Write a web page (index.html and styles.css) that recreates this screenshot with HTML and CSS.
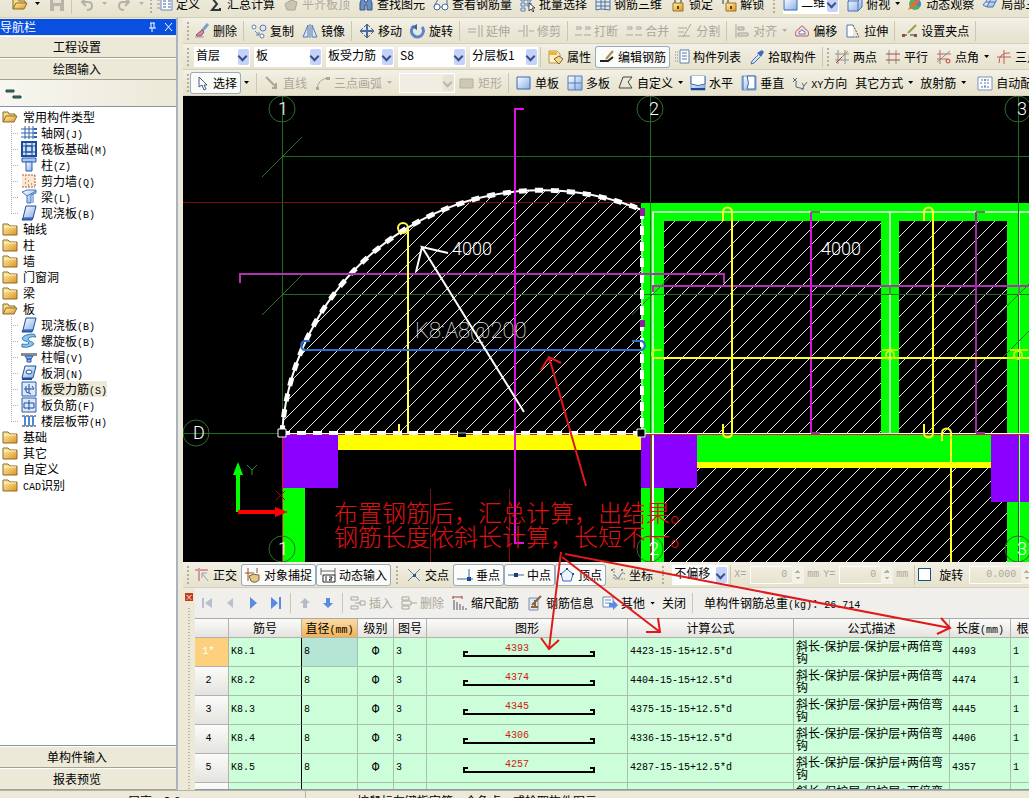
FILE: index.html
```html
<!DOCTYPE html>
<html lang="zh-CN">
<head>
    <meta charset="UTF-8">
    <meta name="viewport" content="width=device-width, initial-scale=1.0">
    <title>钢筋算量</title>
    <link rel="stylesheet" href="styles.css">
</head>
<body>

<!-- icon sprite -->
<svg class="sprite" aria-hidden="true">
    <defs>
        <linearGradient id="gold" x1="0" y1="0" x2="1" y2="1"><stop offset="0" stop-color="#fff3b0"/><stop offset="1" stop-color="#e0931c"/></linearGradient>
        <linearGradient id="sky" x1="0" y1="0" x2="1" y2="1"><stop offset="0" stop-color="#ffffff"/><stop offset="1" stop-color="#86aee8"/></linearGradient>
        <pattern id="hatch" width="16" height="16" patternUnits="userSpaceOnUse"><path d="M-1 17L17 -1M-1 1L1 -1M15 17L17 15" stroke="#e4e4e4" stroke-width="1"/></pattern>
    </defs>
    <symbol id="i-folder" viewBox="0 0 16 16"><path d="M1 3h5l2 2h7v9H1z" fill="url(#gold)" stroke="#8a6a28"/><path d="M2 6h12" stroke="#fff6c8"/></symbol>
    <symbol id="i-open" viewBox="0 0 16 16"><path d="M1 13V3h5l1 2h6v3" fill="#f7dc85" stroke="#8a6a28"/><path d="M1 13l3-6h11l-3 6z" fill="url(#gold)" stroke="#8a6a28"/></symbol>
    <symbol id="i-save" viewBox="0 0 16 16"><path d="M1 2h14v13H1z" fill="#b8b5a8"/><path d="M4 2h8v5H4zM5 10h6v5H5z" fill="#e4e1d3"/></symbol>
    <symbol id="i-undo" viewBox="0 0 16 16"><path d="M3 6h6q4 0 4 4t-5 4M7 2L3 6l4 4" fill="none" stroke="#b5b2a4" stroke-width="2"/></symbol>
    <symbol id="i-redo" viewBox="0 0 16 16"><path d="M13 6H7q-4 0-4 4t5 4M9 2l4 4-4 4" fill="none" stroke="#b5b2a4" stroke-width="2"/></symbol>
    <symbol id="i-form" viewBox="0 0 16 16"><path d="M4 1h11v13H4z" fill="#fff" stroke="#6a87b8"/><path d="M6 5h3M11 5h3M6 8h3M11 8h3M6 11h3M11 11h3" stroke="#3a62a8"/><path d="M0 4h3M0 8h3M0 12h3" stroke="#8a94a8"/></symbol>
    <symbol id="i-sum" viewBox="0 0 16 16"><path d="M12 4V2H4l5 6-5 6h8v-2" fill="none" stroke="#30363e" stroke-width="2"/></symbol>
    <symbol id="i-level" viewBox="0 0 16 16"><path d="M2 8l6-4 6 2-2 8H4z" fill="#c9c5b5" stroke="#aaa697"/><path d="M3 4l4-3 7 2" stroke="#aaa697" fill="none"/></symbol>
    <symbol id="i-find" viewBox="0 0 16 16"><path d="M2 7l2-5h2l1 4h2l1-4h2l2 5v7h-5V9H7v5H2z" fill="#6b8fc4" stroke="#345587"/></symbol>
    <symbol id="i-glasses" viewBox="0 0 16 16"><circle cx="4" cy="11" r="3" fill="#fff" stroke="#4c6a9a"/><circle cx="12" cy="11" r="3" fill="#fff" stroke="#4c6a9a"/><path d="M7 11h2M1 11l4-8M14 9V3" stroke="#4c6a9a" fill="none"/></symbol>
    <symbol id="i-batch" viewBox="0 0 16 16"><path d="M1 2h4v3H1zM7 2h4v3H7zM1 7h4v3H1zM1 12h4v3H1zM7 7h4v3H7z" fill="#dce6f5" stroke="#5d7cab"/><path d="M9 7v8l2-2 2 3 1-1-2-3h3z" fill="#fff" stroke="#444"/></symbol>
    <symbol id="i-rebar3d" viewBox="0 0 16 16"><path d="M1 2v12l5-1V3zM6 3h9v11L6 13M1 6h14M1 10h14M10 3v11" fill="none" stroke="#4a72b0"/></symbol>
    <symbol id="i-lock" viewBox="0 0 16 16"><path d="M5 8V4q0-2 3-2t3 2v4" fill="none" stroke="#8f8d85" stroke-width="2"/><path d="M3 7h10v8H3z" fill="url(#gold)" stroke="#9a7326"/><path d="M8 10v3" stroke="#604510" stroke-width="2"/></symbol>
    <symbol id="i-unlock" viewBox="0 0 16 16"><path d="M2 8V4q0-2 2-2t3 2v4" fill="none" stroke="#8f8d85" stroke-width="2"/><path d="M5 7h10v8H5z" fill="url(#gold)" stroke="#9a7326"/><path d="M10 10v3" stroke="#604510" stroke-width="2"/></symbol>
    <symbol id="i-box" viewBox="0 0 16 16"><path d="M1 5l4-4h10v10l-4 4H1z" fill="url(#sky)" stroke="#4a72b0"/><path d="M1 5h10v10M11 5l4-4" fill="none" stroke="#4a72b0"/></symbol>
    <symbol id="i-orbit" viewBox="0 0 16 16"><circle cx="8" cy="8" r="6" fill="#58b05c"/><path d="M8 2a6 6 0 0 1 5 9L8 8z" fill="#3f86d6"/><path d="M1 14q3-8 13-12-4 9-13 12z" fill="#e86a3a"/></symbol>
    <symbol id="i-part" viewBox="0 0 16 16"><path d="M1 9l5-6h9l-4 8H5z" fill="url(#sky)" stroke="#4a72b0"/><path d="M4 6h9M9 3L5 11" stroke="#4a72b0"/></symbol>
    <symbol id="i-brush" viewBox="0 0 16 16"><path d="M14 1L8 8" stroke="#7f9fc8" stroke-width="3"/><path d="M8 7l2 2-3 4H3l-1-1z" fill="#d68aa4" stroke="#8d5068"/><path d="M1 14h9" stroke="#9a9a9a"/></symbol>
    <symbol id="i-copy" viewBox="0 0 16 16"><circle cx="3" cy="4" r="2" fill="#fff" stroke="#5d7cab"/><circle cx="12" cy="5" r="3" fill="#dbe7f8" stroke="#5d7cab"/><circle cx="11" cy="13" r="2" fill="#fff" stroke="#5d7cab"/><path d="M4 8l4 4M5 12h3V9" stroke="#5d7cab" fill="none"/></symbol>
    <symbol id="i-mirror" viewBox="0 0 16 16"><path d="M6 2v12H1zM10 2v12h5z" fill="#d8e6f8" stroke="#4f79b4"/><path d="M8 1v14" stroke="#4f79b4"/></symbol>
    <symbol id="i-move" viewBox="0 0 16 16"><path d="M8 2v12M2 8h12" stroke="#4c6d9c" stroke-width="2"/><path d="M5 4l3-3 3 3M5 12l3 3 3-3M4 5L1 8l3 3M12 5l3 3-3 3" fill="none" stroke="#4c6d9c"/></symbol>
    <symbol id="i-rotate" viewBox="0 0 16 16"><path d="M4 3a6 6 0 1 0 8 1" fill="none" stroke="#5a85cc" stroke-width="3"/><path d="M7 1v6L2 4z" fill="#3a62b0"/></symbol>
    <symbol id="i-extend" viewBox="0 0 16 16"><path d="M1 6h8M1 9h8M12 2v12M15 2v12" stroke="#aaa798"/></symbol>
    <symbol id="i-trim" viewBox="0 0 16 16"><path d="M0 8h5M11 8h5M6 2v12M9 2v12" stroke="#aaa798"/></symbol>
    <symbol id="i-break" viewBox="0 0 16 16"><path d="M1 4h5v2H1M10 4h5v2h-5M0 12h7M9 12h7" stroke="#aaa798" fill="none"/></symbol>
    <symbol id="i-split" viewBox="0 0 16 16"><path d="M1 5h9M1 9h6M14 1L6 14M1 13h12" stroke="#aaa798" fill="none"/></symbol>
    <symbol id="i-align" viewBox="0 0 16 16"><path d="M2 1v14" stroke="#aaa798"/><path d="M4 4h6v3H4zM4 10h10v3H4z" fill="#d8d4c4" stroke="#aaa798"/></symbol>
    <symbol id="i-offset" viewBox="0 0 16 16"><path d="M2 13q-2-5 3-7 3-6 6 0 5 2 3 7z" fill="#f8dce0" stroke="#c25a6a"/><path d="M5 11q-1-3 2-3 1-3 2 0 3 0 2 3z" fill="#fff" stroke="#5d7cab"/></symbol>
    <symbol id="i-stretch" viewBox="0 0 16 16"><path d="M8 14H2V2h6" fill="#fff" stroke="#4f79b4"/><path d="M8 2l6 12H8" fill="none" stroke="#555" stroke-dasharray="2 1"/></symbol>
    <symbol id="i-grip" viewBox="0 0 16 16"><path d="M2 12h3M8 12h5" stroke="#333"/><path d="M14 2L6 10" stroke="#a39a48" stroke-width="2"/><path d="M0 11h3v3H0zM12 11h3v3h-3z" fill="#8a5050"/></symbol>
    <symbol id="i-prop" viewBox="0 0 16 16"><path d="M1 2h8l3 3v9H1z" fill="#fdf0c4" stroke="#b8964a"/><path d="M1 3h8v3H1z" fill="#f0b23c"/><path d="M6 10l5-3 4 3-4 5z" fill="#f6d888" stroke="#7a663a"/></symbol>
    <symbol id="i-edit" viewBox="0 0 16 16"><path d="M1 12h8l5-4" fill="none" stroke="#222" stroke-width="2"/><path d="M14 2L7 10" stroke="#b08850" stroke-width="2"/></symbol>
    <symbol id="i-list" viewBox="0 0 16 16"><path d="M6 1h9v13H6z" fill="#fff" stroke="#5d7cab"/><path d="M8 4h5M8 7h5M8 10h5" stroke="#4a72b0"/><path d="M1 3h3M1 6h3M1 9h3M1 12h3" stroke="#888" stroke-dasharray="1 1"/></symbol>
    <symbol id="i-pick" viewBox="0 0 16 16"><path d="M9 6l-6 6-1 3 3-1 6-6" fill="#cfe2fa" stroke="#4a72b0"/><path d="M8 4l4 4 3-5-2-2z" fill="#3b6cb8"/></symbol>
    <symbol id="i-2pt" viewBox="0 0 16 16"><path d="M4 1v14M11 1v14M1 5h14M1 11h14" stroke="#8c9098"/><path d="M2 14L14 2" stroke="#ad8a50"/><path d="M2 14L8 8" stroke="#b33"/></symbol>
    <symbol id="i-parallel" viewBox="0 0 16 16"><path d="M4 1v14M11 1v14" stroke="#8c9098"/><path d="M1 5h14M1 11h14" stroke="#b04848"/></symbol>
    <symbol id="i-angle" viewBox="0 0 16 16"><path d="M4 1v14M1 5h14M1 10h10" stroke="#b06a6a"/><path d="M1 13L14 2" stroke="#8c9098"/><circle cx="12" cy="12" r="2" fill="none" stroke="#c33"/></symbol>
    <symbol id="i-3pt" viewBox="0 0 16 16"><path d="M1 8h14M8 1v14" stroke="#c05a5a"/><path d="M3 14Q3 3 14 4" fill="none" stroke="#c05a5a"/></symbol>
    <symbol id="i-cursor" viewBox="0 0 16 16"><path d="M5 2v10l3-2 2 5 2-1-2-4h3z" fill="#fff" stroke="#445a80"/></symbol>
    <symbol id="i-line" viewBox="0 0 16 16"><path d="M2 2l10 10M12 8v5H8" fill="none" stroke="#aaa798" stroke-width="2"/></symbol>
    <symbol id="i-arc" viewBox="0 0 16 16"><path d="M2 14Q3 4 13 3" fill="none" stroke="#aaa798"/><path d="M1 12h3v3H1zM11 2h4v3h-4z" fill="#aaa798"/></symbol>
    <symbol id="i-rect" viewBox="0 0 16 16"><path d="M1 4h13v9H1z" fill="#cdc9b9" stroke="#b5b1a1"/></symbol>
    <symbol id="i-single" viewBox="0 0 16 16"><path d="M1 2h13v12H1z" fill="url(#sky)" stroke="#3b68b0"/></symbol>
    <symbol id="i-multi" viewBox="0 0 16 16"><path d="M1 1h14v14H1z" fill="url(#sky)" stroke="#5a7cab"/><path d="M8 1v14M1 8h14" stroke="#5a7cab"/></symbol>
    <symbol id="i-custom" viewBox="0 0 16 16"><path d="M5 2h9l-4 5 4 6H1z" fill="none" stroke="#444"/></symbol>
    <symbol id="i-horz" viewBox="0 0 16 16"><path d="M1 1h14v14H1z" fill="url(#sky)" stroke="#7a9acb"/><path d="M1 1v8q7 3 14 0V1" fill="#fff" stroke="#3b68b0"/><path d="M1 14h14" stroke="#204a90" stroke-width="2"/></symbol>
    <symbol id="i-vert" viewBox="0 0 16 16"><path d="M1 1h14v14H1z" fill="url(#sky)" stroke="#7a9acb"/><path d="M6 1q3 7 0 13h8V1z" fill="#fff" stroke="#3b68b0"/><path d="M2 1v14" stroke="#3b68b0"/></symbol>
    <symbol id="i-xy" viewBox="0 0 16 16"><path d="M1 3l4 4M5 3L1 7M4 7v5l8 2M10 8l2 3 3-4M12 11l-2 4" fill="none" stroke="#54698f"/></symbol>
    <symbol id="i-auto" viewBox="0 0 16 16"><path d="M1 2h14v13H1z" fill="#fff" stroke="#7c93b8"/><path d="M8 4v9M4 5h8M4 12h8M3 8h3M10 8h3" stroke="#4a72b0" stroke-dasharray="2 1"/></symbol>
    <!-- tree -->
    <symbol id="i-grid" viewBox="0 0 16 16"><path d="M4 1v13M8 1v13M12 1v13M0 4h14M0 8h14M0 12h14" stroke="#2f62b0"/><path d="M13 3h3v2h-3zM13 7h3v2h-3zM13 11h3v2h-3z" fill="#2f62b0"/></symbol>
    <symbol id="i-raft" viewBox="0 0 16 16"><path d="M1 1h14v14H1z" fill="#cfe0fa" stroke="#1d4c9a" stroke-width="2"/><path d="M5 5h6v6H5zM5 1v14M11 1v14M1 5h14M1 11h14" fill="none" stroke="#1d4c9a"/></symbol>
    <symbol id="i-column" viewBox="0 0 16 16"><path d="M1 1h14v4H1z" fill="#a9c7f2" stroke="#2b5aa8"/><path d="M5 5h6v9H5z" fill="url(#sky)" stroke="#2b5aa8"/></symbol>
    <symbol id="i-wall" viewBox="0 0 16 16"><path d="M1 2h13v12H1z" fill="#fbe6cf"/><path d="M1 2h13M14 2v12M1 14h13" stroke="#a55b3a" stroke-dasharray="2 1"/><path d="M4 10h1M7 8h1M10 11h1M7 12h1M4 6h1" stroke="#8a4a2a"/></symbol>
    <symbol id="i-beam" viewBox="0 0 16 16"><path d="M1 3l5-2h9v3L10 6v8H6V7z" fill="url(#sky)" stroke="#3f78c0"/><path d="M6 7l9-5M12 5v9" stroke="#3f78c0"/></symbol>
    <symbol id="i-slab" viewBox="0 0 16 16"><path d="M5 1h10l-3 12H2z" fill="url(#sky)" stroke="#1d4c9a"/><path d="M2 13l-1 2h10l1-2" fill="#3b6cb8" stroke="#1d4c9a"/></symbol>
    <symbol id="i-spiral" viewBox="0 0 16 16"><path d="M1 5q3-4 12-4l2 3q-7-1-8 2 0 2 4 3 4 2-1 4-4 2-9 1l0-3q6 1 7-1-1-2-4-2-3-1-3-3z" fill="#8cc6ee" stroke="#3178b4"/></symbol>
    <symbol id="i-cap" viewBox="0 0 16 16"><path d="M0 4h16v3H0z" fill="#888c92"/><path d="M4 7h8l-2 3H6zM6 10h4v3H6z" fill="#8eb4ec" stroke="#2b5aa8"/></symbol>
    <symbol id="i-hole" viewBox="0 0 16 16"><path d="M4 1h11l-3 12H1z" fill="url(#sky)" stroke="#1d4c9a"/><ellipse cx="8" cy="7" rx="3" ry="2" fill="#fff" stroke="#1d4c9a"/><path d="M1 14h10" stroke="#1d4c9a" stroke-width="2"/></symbol>
    <symbol id="i-force" viewBox="0 0 16 16"><path d="M1 1h14v14H1z" fill="#dbe8fb" stroke="#2b5aa8"/><path d="M8 3v8q0 2 2 2M5 5v5q0 2 3 2M3 8h10l-2-3" fill="none" stroke="#1d4c9a"/></symbol>
    <symbol id="i-neg" viewBox="0 0 16 16"><path d="M1 1h14v14H1z" fill="#dbe8fb" stroke="#2b5aa8"/><path d="M8 3v10M3 6h10v5M3 6v5M3 11h10" fill="none" stroke="#1d4c9a"/></symbol>
    <symbol id="i-band" viewBox="0 0 16 16"><path d="M1 3h14M1 13h14" stroke="#222" stroke-dasharray="3 1"/><path d="M3 3h2v10H3zM7 3h2v10H7zM11 3h2v10h-2z" fill="#4f86d8"/></symbol>
    <!-- snap bar -->
    <symbol id="i-ortho" viewBox="0 0 16 16"><path d="M1 3h13M5 1v13" stroke="#d69a9a" stroke-width="2"/><path d="M8 6l6 8M8 6v5M8 6h5" stroke="#9aa3b8" fill="none"/></symbol>
    <symbol id="i-osnap" viewBox="0 0 16 16"><path d="M3 1v13M0 6h9M12 1v5" stroke="#a04a28"/><path d="M4 9q4-3 10-1v5q-4 4-8 1z" fill="#e4c888" stroke="#7a6030"/></symbol>
    <symbol id="i-dyn" viewBox="0 0 16 16"><path d="M1 1v7M15 1v7M1 4h14" stroke="#666" fill="none"/><path d="M3 8h12v7H3z" fill="#fff" stroke="#222"/><path d="M6 9v5M9 10h3v1l-3 2h3" stroke="#222" fill="none"/></symbol>
    <symbol id="i-cross" viewBox="0 0 16 16"><path d="M2 2l12 12M14 2L2 14" stroke="#5a7ca8"/><path d="M7 7h3v3H7z" fill="#345587"/></symbol>
    <symbol id="i-perp" viewBox="0 0 16 16"><path d="M0 12h16M12 2v10" stroke="#3a68a8"/><path d="M10 10h4v4h-4z" fill="#204a90"/></symbol>
    <symbol id="i-mid" viewBox="0 0 16 16"><path d="M0 8h16" stroke="#3a68a8"/><path d="M6 6h4v4H6z" fill="#1d3c6a"/></symbol>
    <symbol id="i-vertex" viewBox="0 0 16 16"><path d="M8 2l6 5-2 7H4L2 7z" fill="#eef5fd" stroke="#3a68a8"/><path d="M7 1h2v2H7zM1 6h2v2H1zM13 6h2v2h-2z" fill="#204a90"/></symbol>
    <symbol id="i-coord" viewBox="0 0 16 16"><path d="M4 1v11h11" stroke="#888" stroke-dasharray="2 1" fill="none"/><path d="M5 8q3 6 5 1t5-2" fill="none" stroke="#5a7ca8"/><circle cx="2" cy="3" r="1" fill="#555"/><circle cx="12" cy="3" r="1" fill="#555"/></symbol>
    <!-- record bar -->
    <symbol id="i-first" viewBox="0 0 16 16"><path d="M3 3h2v10H3zM13 3v10L6 8z" fill="#b9bfcd"/></symbol>
    <symbol id="i-prev" viewBox="0 0 16 16"><path d="M11 3v10L5 8z" fill="#b9bfcd"/></symbol>
    <symbol id="i-next" viewBox="0 0 16 16"><path d="M5 2v12l7-6z" fill="#5a8ae4"/></symbol>
    <symbol id="i-last" viewBox="0 0 16 16"><path d="M3 2v12l7-6zM11 2h2v12h-2z" fill="#5a8ae4"/></symbol>
    <symbol id="i-up" viewBox="0 0 16 16"><path d="M8 3l5 5h-3v5H6V8H3z" fill="#b4bccb"/></symbol>
    <symbol id="i-down" viewBox="0 0 16 16"><path d="M8 13l5-5h-3V3H6v5H3z" fill="#5a8ae4"/></symbol>
    <symbol id="i-insert" viewBox="0 0 16 16"><path d="M1 2h7v3H1zM1 11h7v3H1zM5 8h6M10 6h5v4h-5z" fill="none" stroke="#aaa798"/></symbol>
    <symbol id="i-remove" viewBox="0 0 16 16"><path d="M1 2h7v3H1zM1 6h9v4H1zM1 11h7v3H1zM10 8h6" fill="none" stroke="#aaa798"/></symbol>
    <symbol id="i-scale" viewBox="0 0 16 16"><path d="M1 2h9M1 1v3M10 1v3" stroke="#a04030"/><path d="M2 5v10M5 7v8M8 9v6M11 11v4M14 13v2" stroke="#555"/></symbol>
    <symbol id="i-info" viewBox="0 0 16 16"><path d="M2 3h9v12H2z" fill="#dce6f5" stroke="#7f8da8"/><path d="M14 1L5 10M4 12h7M8 5v8" stroke="#8a6440" stroke-width="2"/></symbol>
    <symbol id="i-other" viewBox="0 0 16 16"><path d="M1 2h10v10H1z" fill="#fff" stroke="#6a87b8"/><path d="M3 5h6M3 8h6" stroke="#6a87b8"/><path d="M7 8h4V5l5 5-5 5v-3H7z" fill="#5a8ae4"/></symbol>
</svg>

<div class="app">
    <div class="toolbar main-bar">
        <button class="btn"><svg class="icon"><use href="#i-open"/></svg></button>
        <button class="drop" aria-label="打开"></button>
        <button class="btn" disabled><svg class="icon"><use href="#i-save"/></svg></button>
        <span class="sep"></span>
        <button class="btn" disabled><svg class="icon"><use href="#i-undo"/></svg></button>
        <button class="drop" disabled aria-label="撤销"></button>
        <button class="btn" disabled><svg class="icon"><use href="#i-redo"/></svg></button>
        <button class="drop" disabled aria-label="恢复"></button>
        <span class="grip"></span>
        <button class="btn"><svg class="icon"><use href="#i-form"/></svg>定义</button>
        <button class="btn"><svg class="icon"><use href="#i-sum"/></svg>汇总计算</button>
        <button class="btn" disabled><svg class="icon"><use href="#i-level"/></svg>平齐板顶</button>
        <button class="btn"><svg class="icon"><use href="#i-find"/></svg>查找图元</button>
        <button class="btn"><svg class="icon"><use href="#i-glasses"/></svg>查看钢筋量</button>
        <button class="btn"><svg class="icon"><use href="#i-batch"/></svg>批量选择</button>
        <button class="btn"><svg class="icon"><use href="#i-rebar3d"/></svg>钢筋三维</button>
        <button class="btn"><svg class="icon"><use href="#i-lock"/></svg>锁定</button>
        <button class="btn"><svg class="icon"><use href="#i-unlock"/></svg>解锁</button>
        <span class="grip mid"></span>
        <span class="combo with-icon"><svg class="icon"><use href="#i-single"/></svg><select aria-label="视图"><option>二维</option></select></span>
        <button class="btn after-combo"><svg class="icon"><use href="#i-box"/></svg>俯视<span class="caret"></span></button>
        <button class="btn"><svg class="icon"><use href="#i-orbit"/></svg>动态观察</button>
        <button class="btn"><svg class="icon"><use href="#i-part"/></svg>局部三维</button>
    </div>

    <div class="content">
        <nav class="sidebar">
            <div class="nav-title">
                <span>导航栏</span>
                <svg class="nav-tools" viewBox="0 0 30 14"><path d="M4 3h5M5 3v5M8 3v5M3 8h7M6 8v4M19 3l7 8M26 3l-7 8" stroke="#fff" fill="none"/></svg>
            </div>
            <button class="nav-btn">工程设置</button>
            <button class="nav-btn">绘图输入</button>
            <div class="tree-head"><svg width="40" height="20"><path d="M6 6h8v2H6zM13 12h8v2h-8z" fill="#3c6e6a" stroke="#23474a"/></svg></div>
            <ul class="tree">
                <li><svg class="icon"><use href="#i-open"/></svg><span>常用构件类型</span>
                    <ul>
                        <li><svg class="icon"><use href="#i-grid"/></svg><span>轴网<i>(J)</i></span></li>
                        <li><svg class="icon"><use href="#i-raft"/></svg><span>筏板基础<i>(M)</i></span></li>
                        <li><svg class="icon"><use href="#i-column"/></svg><span>柱<i>(Z)</i></span></li>
                        <li><svg class="icon"><use href="#i-wall"/></svg><span>剪力墙<i>(Q)</i></span></li>
                        <li><svg class="icon"><use href="#i-beam"/></svg><span>梁<i>(L)</i></span></li>
                        <li><svg class="icon"><use href="#i-slab"/></svg><span>现浇板<i>(B)</i></span></li>
                    </ul>
                </li>
                <li><svg class="icon"><use href="#i-folder"/></svg><span>轴线</span></li>
                <li><svg class="icon"><use href="#i-folder"/></svg><span>柱</span></li>
                <li><svg class="icon"><use href="#i-folder"/></svg><span>墙</span></li>
                <li><svg class="icon"><use href="#i-folder"/></svg><span>门窗洞</span></li>
                <li><svg class="icon"><use href="#i-folder"/></svg><span>梁</span></li>
                <li><svg class="icon"><use href="#i-open"/></svg><span>板</span>
                    <ul>
                        <li><svg class="icon"><use href="#i-slab"/></svg><span>现浇板<i>(B)</i></span></li>
                        <li><svg class="icon"><use href="#i-spiral"/></svg><span>螺旋板<i>(B)</i></span></li>
                        <li><svg class="icon"><use href="#i-cap"/></svg><span>柱帽<i>(V)</i></span></li>
                        <li><svg class="icon"><use href="#i-hole"/></svg><span>板洞<i>(N)</i></span></li>
                        <li><svg class="icon"><use href="#i-force"/></svg><span class="current">板受力筋<i>(S)</i></span></li>
                        <li><svg class="icon"><use href="#i-neg"/></svg><span>板负筋<i>(F)</i></span></li>
                        <li><svg class="icon"><use href="#i-band"/></svg><span>楼层板带<i>(H)</i></span></li>
                    </ul>
                </li>
                <li><svg class="icon"><use href="#i-folder"/></svg><span>基础</span></li>
                <li><svg class="icon"><use href="#i-folder"/></svg><span>其它</span></li>
                <li><svg class="icon"><use href="#i-folder"/></svg><span>自定义</span></li>
                <li><svg class="icon"><use href="#i-folder"/></svg><span><i>CAD</i>识别</span></li>
            </ul>
            <button class="nav-btn">单构件输入</button>
            <button class="nav-btn">报表预览</button>
        </nav>

        <main class="workspace">
            <div class="toolbar">
                <span class="grip"></span>
                <button class="btn"><svg class="icon"><use href="#i-brush"/></svg>删除</button>
                <span class="sep"></span>
                <button class="btn"><svg class="icon"><use href="#i-copy"/></svg>复制</button>
                <button class="btn"><svg class="icon"><use href="#i-mirror"/></svg>镜像</button>
                <span class="sep"></span>
                <button class="btn"><svg class="icon"><use href="#i-move"/></svg>移动</button>
                <button class="btn"><svg class="icon"><use href="#i-rotate"/></svg>旋转</button>
                <span class="sep"></span>
                <button class="btn" disabled><svg class="icon"><use href="#i-extend"/></svg>延伸</button>
                <button class="btn" disabled><svg class="icon"><use href="#i-trim"/></svg>修剪</button>
                <span class="sep"></span>
                <button class="btn" disabled><svg class="icon"><use href="#i-break"/></svg>打断</button>
                <button class="btn" disabled><svg class="icon"><use href="#i-break"/></svg>合并</button>
                <button class="btn" disabled><svg class="icon"><use href="#i-split"/></svg>分割</button>
                <span class="sep"></span>
                <button class="btn" disabled><svg class="icon"><use href="#i-align"/></svg>对齐<span class="caret"></span></button>
                <button class="btn"><svg class="icon"><use href="#i-offset"/></svg>偏移</button>
                <button class="btn"><svg class="icon"><use href="#i-stretch"/></svg>拉伸</button>
                <span class="sep"></span>
                <button class="btn"><svg class="icon"><use href="#i-grip"/></svg>设置夹点</button>
                <span class="sep"></span>
            </div>

            <div class="toolbar">
                <span class="grip"></span>
                <span class="combo"><select aria-label="楼层"><option>首层</option></select></span>
                <span class="combo wide"><select aria-label="构件"><option>板</option></select></span>
                <span class="combo wide"><select aria-label="构件类型"><option>板受力筋</option></select></span>
                <span class="combo wide"><select aria-label="构件名称"><option>S8</option></select></span>
                <span class="combo wide"><select aria-label="分层板"><option>分层板1</option></select></span>
                <span class="sep"></span>
                <button class="btn"><svg class="icon"><use href="#i-prop"/></svg>属性</button>
                <button class="btn pressed"><svg class="icon"><use href="#i-edit"/></svg>编辑钢筋</button>
                <button class="btn"><svg class="icon"><use href="#i-list"/></svg>构件列表</button>
                <button class="btn"><svg class="icon"><use href="#i-pick"/></svg>拾取构件</button>
                <span class="sep"></span>
                <span class="grip"></span>
                <button class="btn"><svg class="icon"><use href="#i-2pt"/></svg>两点</button>
                <button class="btn"><svg class="icon"><use href="#i-parallel"/></svg>平行</button>
                <button class="btn"><svg class="icon"><use href="#i-angle"/></svg>点角<span class="caret"></span></button>
                <button class="btn"><svg class="icon"><use href="#i-3pt"/></svg>三点辅轴</button>
            </div>

            <div class="toolbar">
                <span class="grip"></span>
                <button class="btn pressed"><svg class="icon"><use href="#i-cursor"/></svg>选择</button>
                <button class="drop" aria-label="选择方式"></button>
                <span class="sep"></span>
                <button class="btn" disabled><svg class="icon"><use href="#i-line"/></svg>直线</button>
                <button class="btn" disabled><svg class="icon"><use href="#i-arc"/></svg>三点画弧<span class="caret"></span></button>
                <span class="combo"><select disabled aria-label="弧参数"><option></option></select></span>
                <button class="btn" disabled><svg class="icon"><use href="#i-rect"/></svg>矩形</button>
                <span class="sep"></span>
                <button class="btn"><svg class="icon"><use href="#i-single"/></svg>单板</button>
                <button class="btn"><svg class="icon"><use href="#i-multi"/></svg>多板</button>
                <button class="btn"><svg class="icon"><use href="#i-custom"/></svg>自定义<span class="caret"></span></button>
                <button class="btn"><svg class="icon"><use href="#i-horz"/></svg>水平</button>
                <button class="btn"><svg class="icon"><use href="#i-vert"/></svg>垂直</button>
                <button class="btn"><svg class="icon"><use href="#i-xy"/></svg><span><i>XY</i>方向</span></button>
                <button class="btn">其它方式<span class="caret"></span></button>
                <button class="btn">放射筋<span class="caret"></span></button>
                <button class="btn after-combo"><svg class="icon"><use href="#i-auto"/></svg>自动配筋</button>
            </div>

            <div class="canvas">
                <svg class="drawing">
                    <g transform="translate(-183 -96)" fill="none">
                        <!-- hatched slabs -->
                        <path d="M282 433A261 261 0 0 1 642 210V433z" fill="url(#hatch)"/>
                        <path d="M664 221H881V433H664zM899 221H1007V433H899zM664 468H1007V562H664z" fill="url(#hatch)"/>

                        <!-- walls, beams, columns -->
                        <g shape-rendering="crispEdges">
                            <path d="M641 203H3000V221H664V562H641zM881 221h18v212h-18zM1007 221h24v341h-24zM697 433h294v29H697zM283 488h22v74h-22z" fill="#00ff00"/>
                            <path d="M338 434h303v16H338zM697 462h294v6H697z" fill="#ffff00"/>
                            <path d="M283 434h55v54h-55zM641 433h56v55h-56zM991 433h60v69h-60z" fill="#8c00ff"/>
                            <path d="M653 562V212H3000M890 212V433M1019 212V562" stroke="#b4f7b4" stroke-width="2"/>
                            <path d="M653 434V562" stroke="#fff" stroke-width="2"/>
                        </g>

                        <!-- axes -->
                        <g stroke="#1f6b1f" shape-rendering="crispEdges">
                            <path d="M282 96V562M650 96V562M1018 96V562M282 156H3000M282 294H3000M183 433H282"/>
                        </g>
                        <g stroke="#2c6e2c">
                            <circle cx="282" cy="109" r="13"/><circle cx="650" cy="109" r="13"/><circle cx="1018" cy="109" r="13"/>
                            <circle cx="282" cy="549" r="13"/><circle cx="650" cy="549" r="13"/><circle cx="1018" cy="549" r="13"/>
                            <circle cx="196" cy="433" r="13"/>
                            <path d="M262 177L302 137M262 315L302 275M632 315L670 277M998 315L1032 281M1000 360L1032 328"/>
                        </g>
                        <g shape-rendering="crispEdges">
                            <path d="M183 202H641M430 489V562M509 489V562" stroke="#7a1010"/>
                            <path d="M282 433H3000" stroke="#fff"/>
                            <path d="M282 434H3000M282 434V562M651 434V562" stroke="#d02020"/>
                        </g>

                        <!-- selected slab outline -->
                        <path d="M282 433A261 261 0 0 1 642 210" stroke="#fff" stroke-width="2"/>
                        <path d="M282 433A261 261 0 0 1 642 210" stroke="#fff" stroke-width="5" stroke-dasharray="8 8"/>
                        <path d="M642 210V433M642 433H282" stroke="#fff" stroke-width="4" stroke-dasharray="9 7"/>
                        <path d="M642 210V433" stroke="#fff"/>
                        <path d="M640 208h5v8h-5zM640 320h5v7h-5z" fill="#9020a0"/>
                        <path d="M278 429h8v8h-8zM637 429h8v8h-8z" fill="#000" stroke="#fff"/>
                        <path d="M458 429h8v8h-8z" fill="#000"/>
                        <path d="M458 433h8" stroke="#8cc"/>

                        <!-- rebar -->
                        <g stroke-width="2">
                            <path d="M240 283V274H724V283M653 292V286H3000" stroke="#b032b0"/>
                            <path d="M524 109H515V543H524M811 212V433" stroke="#e010e0"/>
                            <path d="M976 212V433M811 433h9M976 433h9" stroke="#a02ca0"/>
                            <path d="M811 212h9M976 212h9M890 286v9M1019 286v9" stroke="#6d7a5d"/>
                            <path d="M408 433V228M399 424v9" stroke="#ffff50"/>
                            <circle cx="403" cy="228" r="5" stroke="#ffff50"/>
                            <path d="M723 221V212a4 4 0 0 1 9 0V433a4 4 0 0 1-9 0V424M924 221V212a4 4 0 0 1 9 0V433a4 4 0 0 1-9 0V424M942 441v-8a4 4 0 0 1 9 0V562" stroke="#ffff20"/>
                            <path d="M653 358H3000" stroke="#ffff20"/>
                            <path d="M662 350h-6a4 4 0 0 0 0 8M882 350h16M1010 350h18" stroke="#c0ff00"/>
                            <circle cx="890" cy="355" r="4" stroke="#c0ff00"/><circle cx="1018" cy="355" r="4" stroke="#c0ff00"/>
                            <path d="M310 341h-6a5 5 0 0 0 0 9H642a5 5 0 0 0 0-9h-10" stroke="#2f6fd0"/>
                            <path d="M524 412L422 247L448 253M422 247L416 272" stroke="#fff"/>
                        </g>

                        <g class="cad-text">
                            <text x="278" y="115">1</text><text x="649" y="115">2</text><text x="1017" y="115">3</text>
                            <text x="278" y="555">1</text><text x="649" y="555">2</text><text x="1017" y="555">3</text>
                            <text x="193" y="439">D</text>
                            <text x="452" y="255">4000</text><text x="821" y="255">4000</text>
                            <text x="415" y="338" class="large">K8:A8@200</text>
                        </g>

                        <!-- UCS -->
                        <path d="M238 512V474" stroke="#00ff00" stroke-width="4"/><path d="M233 475l5-13 5 13z" fill="#00ff00"/>
                        <path d="M238 512H276" stroke="#f00" stroke-width="4"/><path d="M275 507l13 5-13 5z" fill="#f00"/>
                        <path d="M247 465l5 5 5-5M252 470v5" stroke="#2c8c2c"/><path d="M276 491l9 9M285 491l-9 9" stroke="#8c1010"/>

                        <g class="note">
                            <text x="334" y="522">布置钢筋后，汇总计算，出结果。</text>
                            <text x="334" y="546">钢筋长度依斜长计算，长短不一。</text>
                        </g>
                    </g>
                </svg>
            </div>

            <div class="toolbar">
                <span class="grip"></span>
                <button class="btn"><svg class="icon"><use href="#i-ortho"/></svg>正交</button>
                <button class="btn pressed"><svg class="icon"><use href="#i-osnap"/></svg>对象捕捉</button>
                <button class="btn pressed"><svg class="icon"><use href="#i-dyn"/></svg>动态输入</button>
                <span class="grip mid"></span>
                <button class="btn"><svg class="icon"><use href="#i-cross"/></svg>交点</button>
                <button class="btn pressed"><svg class="icon"><use href="#i-perp"/></svg>垂点</button>
                <button class="btn pressed"><svg class="icon"><use href="#i-mid"/></svg>中点</button>
                <button class="btn pressed"><svg class="icon"><use href="#i-vertex"/></svg>顶点</button>
                <button class="btn"><svg class="icon"><use href="#i-coord"/></svg>坐标</button>
                <span class="grip mid"></span>
                <span class="combo"><select aria-label="偏移方式"><option>不偏移</option></select></span>
                <span class="sep"></span>
                <label class="dim" for="off-x">X=</label>
                <span class="spin"><input id="off-x" type="text" value="0" disabled></span>
                <span class="dim">mm</span>
                <label class="dim" for="off-y">Y=</label>
                <span class="spin"><input id="off-y" type="text" value="0" disabled></span>
                <span class="dim">mm</span>
                <span class="sep"></span>
                <input type="checkbox" id="rotate"><label for="rotate" class="rotate-label">旋转</label>
                <span class="spin large"><input type="text" value="0.000" disabled aria-label="旋转角度"></span>
            </div>

            <section class="rebar-panel">
                <div class="panel-edge"><button class="close" aria-label="关闭面板">×</button></div>
                <div class="panel-body">
                    <div class="toolbar record-bar">
                        <button class="btn tool" disabled><svg class="icon"><use href="#i-first"/></svg></button>
                        <button class="btn tool" disabled><svg class="icon"><use href="#i-prev"/></svg></button>
                        <button class="btn tool"><svg class="icon"><use href="#i-next"/></svg></button>
                        <button class="btn tool"><svg class="icon"><use href="#i-last"/></svg></button>
                        <span class="sep"></span>
                        <button class="btn tool" disabled><svg class="icon"><use href="#i-up"/></svg></button>
                        <button class="btn tool"><svg class="icon"><use href="#i-down"/></svg></button>
                        <span class="sep"></span>
                        <button class="btn" disabled><svg class="icon"><use href="#i-insert"/></svg>插入</button>
                        <button class="btn" disabled><svg class="icon"><use href="#i-remove"/></svg>删除</button>
                        <button class="btn"><svg class="icon"><use href="#i-scale"/></svg>缩尺配筋</button>
                        <button class="btn"><svg class="icon"><use href="#i-info"/></svg>钢筋信息</button>
                        <button class="btn"><svg class="icon"><use href="#i-other"/></svg>其他<span class="caret"></span></button>
                        <button class="btn">关闭</button>
                        <span class="sep"></span>
                        <span class="total">单构件钢筋总重<i>(kg)</i>：<i>26.714</i></span>
                    </div>
                    <div class="table-wrap">
                        <table>
                            <colgroup>
                                <col class="c-no"><col class="c-name"><col class="c-dia"><col class="c-grade"><col class="c-fig">
                                <col class="c-shape"><col class="c-formula"><col class="c-desc"><col class="c-len"><col class="c-count">
                            </colgroup>
                            <thead>
                                <tr><th></th><th>筋号</th><th class="active">直径<i>(mm)</i></th><th>级别</th><th>图号</th><th>图形</th><th>计算公式</th><th>公式描述</th><th>长度<i>(mm)</i></th><th>根数</th></tr>
                            </thead>
                            <tbody>
                                <tr class="selected"><th>1*</th><td>K8.1</td><td class="cell">8</td><td class="grade">Φ</td><td>3</td><td class="shape"><svg><text x="90" y="13">4393</text><path d="M41 14h-4v4h130v-4h-4"/></svg></td><td>4423-15-15+12.5*d</td><td class="desc">斜长-保护层-保护层+两倍弯钩</td><td>4493</td><td>1</td></tr>
                                <tr><th>2</th><td>K8.2</td><td>8</td><td class="grade">Φ</td><td>3</td><td class="shape"><svg><text x="90" y="13">4374</text><path d="M41 14h-4v4h130v-4h-4"/></svg></td><td>4404-15-15+12.5*d</td><td class="desc">斜长-保护层-保护层+两倍弯钩</td><td>4474</td><td>1</td></tr>
                                <tr><th>3</th><td>K8.3</td><td>8</td><td class="grade">Φ</td><td>3</td><td class="shape"><svg><text x="90" y="13">4345</text><path d="M41 14h-4v4h130v-4h-4"/></svg></td><td>4375-15-15+12.5*d</td><td class="desc">斜长-保护层-保护层+两倍弯钩</td><td>4445</td><td>1</td></tr>
                                <tr><th>4</th><td>K8.4</td><td>8</td><td class="grade">Φ</td><td>3</td><td class="shape"><svg><text x="90" y="13">4306</text><path d="M41 14h-4v4h130v-4h-4"/></svg></td><td>4336-15-15+12.5*d</td><td class="desc">斜长-保护层-保护层+两倍弯钩</td><td>4406</td><td>1</td></tr>
                                <tr><th>5</th><td>K8.5</td><td>8</td><td class="grade">Φ</td><td>3</td><td class="shape"><svg><text x="90" y="13">4257</text><path d="M41 14h-4v4h130v-4h-4"/></svg></td><td>4287-15-15+12.5*d</td><td class="desc">斜长-保护层-保护层+两倍弯钩</td><td>4357</td><td>1</td></tr>
                                <tr><th></th><td></td><td></td><td></td><td></td><td></td><td></td><td class="desc">斜长-保护层-保护层+两倍弯钩</td><td></td><td></td></tr>
                            </tbody>
                        </table>
                    </div>
                </div>
            </section>

            <!-- red callout arrows -->
            <svg class="callouts">
                <g transform="translate(-183 -18)" fill="none" stroke="#e01818" stroke-width="2">
                    <path d="M586 486L549 357M541 370L549 357L561 363"/>
                    <path d="M561 552L549 649M541 638L549 649L559 640"/>
                    <path d="M562 557L660 632M646 632H660L658 618"/>
                    <path d="M565 554L950 628M941 618L950 628L937 634"/>
                </g>
            </svg>
        </main>
    </div>

    <footer class="status">
        <span class="status-cell">层高：2.8m</span>
        <span class="status-hint">按鼠标左键指定第一个角点，或拾取构件图元</span>
    </footer>
</div>

</body>
</html>
```

FILE: styles.css
```css
* {
    box-sizing: border-box;
    margin: 0;
    padding: 0;
}

body {
    font-family: "Noto Sans CJK SC", "Liberation Sans", sans-serif;
    font-size: 12px;
    line-height: 16px;
    color: #000;
    background-color: #ece9d8;
}

button, select, input {
    font: inherit;
    color: inherit;
    border: none;
    background: none;
}

/* half-width latin runs inside the chinese labels */
i {
    font-family: "Liberation Mono", monospace;
    font-size: 10px;
    font-style: normal;
    line-height: 0;
}

.sprite {
    position: absolute;
    width: 0;
    height: 0;
}

.icon {
    width: 16px;
    height: 16px;
    flex: none;
}

.app {
    display: flex;
    flex-direction: column;
    height: 100vh;
    overflow: hidden;
}

.content {
    display: flex;
    flex: 1;
    min-height: 0;
}

/* Toolbars */
.toolbar {
    display: flex;
    flex: none;
    align-items: center;
    height: 26px;
    padding-left: 3px;
    overflow: hidden;
    white-space: nowrap;
    background: linear-gradient(#f3f1e6, #ebe8d7 50%, #e6e2ce);
    border-bottom: 1px solid #d3cfbb;
}

.main-bar {
    height: 28px;
    margin-top: -10px;
    padding-left: 8px;
}

.btn {
    display: flex;
    flex: none;
    align-items: center;
    gap: 3px;
    height: 22px;
    padding: 0 4px;
}

.btn:disabled {
    color: #aca899;
}

.btn.pressed {
    background-color: #fbfbf9;
    border-radius: 3px;
    box-shadow: inset 0 0 0 1px #9aabbd;
}

.btn.tool {
    padding: 0 3px;
    margin-right: 1px;
}

.after-combo {
    margin-left: 4px;
}

.caret, .drop::after {
    content: "";
    width: 5px;
    height: 3px;
    margin: 0 -1px 0 2px;
    background-color: #000;
    clip-path: polygon(0 0, 100% 0, 50% 100%);
}

.btn:disabled .caret, .drop:disabled::after {
    background-color: #b5b2a4;
}

.drop {
    display: flex;
    flex: none;
    align-items: center;
    width: 13px;
    height: 22px;
    padding-left: 1px;
}

.sep {
    flex: none;
    width: 1px;
    height: 20px;
    margin: 0 3px 0 2px;
    background-color: #cbc7b4;
}

.grip {
    flex: none;
    width: 2px;
    height: 18px;
    margin: 0 1px;
    background: repeating-linear-gradient(#b3af9c 0 2px, transparent 2px 4px);
}

.grip.mid {
    margin: 0 4px 0 5px;
}

/* Drop-down lists */
.combo {
    position: relative;
    display: flex;
    flex: none;
    align-items: center;
    width: 56px;
    height: 20px;
    margin-left: 4px;
    background-color: #fff;
}

.combo.wide {
    width: 68px;
}

.combo select {
    width: 100%;
    height: 20px;
    padding: 0 0 4px 2px;
    appearance: none;
}

.combo::after {
    content: "";
    position: absolute;
    right: 1px;
    top: 2px;
    width: 11px;
    height: 16px;
    border-radius: 2px;
    background: #c3d3fb;
    pointer-events: none;
}

.combo::before {
    content: "";
    position: absolute;
    z-index: 1;
    right: 4px;
    top: 6px;
    width: 5px;
    height: 5px;
    border: solid #3c5180;
    border-width: 0 2px 2px 0;
    transform: rotate(45deg);
    pointer-events: none;
}

.combo:has(select:disabled) {
    background-color: #f0eee2;
    box-shadow: inset 0 0 0 1px #fff;
}

.combo:has(select:disabled)::after {
    background-color: #e6e3d4;
}

.combo:has(select:disabled)::before {
    border-color: #bdb9a8;
}

/* Sidebar */
.sidebar {
    display: flex;
    flex-direction: column;
    flex: none;
    width: 178px;
    margin-right: 5px;
    padding-top: 1px;
    border-right: 2px solid #a9b4c0;
}

.nav-title {
    display: flex;
    justify-content: space-between;
    align-items: center;
    height: 16px;
    margin-bottom: 1px;
    color: #fff;
    background-color: #0a50e0;
}

.nav-tools {
    width: 30px;
    height: 14px;
}

.nav-btn {
    flex: none;
    height: 22px;
    padding-right: 22px;
    background-color: #ece9d8;
    border-top: 1px solid #fff;
    border-bottom: 1px solid #a5a18f;
}

.tree-head {
    flex: none;
    height: 27px;
    padding-top: 4px;
    background: linear-gradient(90deg, #f7f6f0, #ece9d8);
    border-bottom: 1px solid #8795a5;
}

.tree-head svg {
    display: block;
}

.tree {
    flex: 1;
    padding: 2px 0 0 2px;
    overflow: hidden;
    list-style: none;
    background-color: #fff;
    border-bottom: 1px solid #8795a5;
}

.tree li {
    display: flex;
    flex-wrap: wrap;
    gap: 0 5px;
    line-height: 16px;
}

.tree ul {
    width: 100%;
    margin-left: 9px;
    list-style: none;
    background: repeating-linear-gradient(#b0b0b0 0 1px, transparent 1px 2px) no-repeat 0 0 / 1px calc(100% - 8px);
}

.tree ul li {
    gap: 4px;
}

.tree ul li::before {
    content: "";
    width: 7px;
    height: 8px;
    margin-right: -1px;
    border-bottom: 1px dotted #b0b0b0;
}

.current {
    background-color: #ece9d8;
}

/* Workspace */
.workspace {
    position: relative;
    display: flex;
    flex-direction: column;
    flex: 1;
    min-width: 0;
}

.canvas {
    flex: 1;
    min-height: 0;
    background-color: #000;
}

.drawing {
    display: block;
    width: 100%;
    height: 100%;
}

.cad-text {
    font-family: Roboto, sans-serif;
    font-size: 18px;
    font-weight: 300;
    fill: #fff;
}

.cad-text .large {
    font-size: 22px;
    font-weight: 100;
}

.note {
    font-size: 24px;
    font-weight: 300;
    fill: #e01010;
}

.callouts {
    position: absolute;
    inset: 0;
    width: 100%;
    height: 100%;
    pointer-events: none;
}

/* Snap bar fields */
.dim {
    font-family: "Liberation Mono", monospace;
    font-size: 10px;
    color: #aca899;
    margin-right: 4px;
}

.spin {
    display: flex;
    flex: none;
    width: 54px;
    height: 18px;
    margin-right: 3px;
    box-shadow: inset 0 0 0 1px #fff;
}

.spin.large {
    width: 64px;
}

.spin input {
    width: calc(100% - 12px);
    padding-right: 5px;
    font-family: "Liberation Mono", monospace;
    font-size: 10px;
    text-align: right;
    color: #aca899;
}

.spin::after {
    content: "";
    width: 12px;
    background:
        conic-gradient(from 135deg at 50% 0, #b5b2a4 90deg, transparent 0) no-repeat center 4px / 6px 3px,
        conic-gradient(from -45deg at 50% 100%, #b5b2a4 90deg, transparent 0) no-repeat center 11px / 6px 3px,
        #f4f2e8;
}

input[type="checkbox"] {
    flex: none;
    width: 13px;
    height: 13px;
    appearance: none;
    background-color: #fff;
    border: 1px solid #1c5180;
}

.rotate-label {
    flex: none;
    margin: 0 6px 0 8px;
}

/* Rebar table panel */
.rebar-panel {
    display: flex;
    flex: none;
    height: 202px;
}

.panel-edge {
    flex: none;
    width: 12px;
    padding: 5px 0 0 2px;
    background: repeating-linear-gradient(#b9b5a2 0 1px, transparent 1px 3px) no-repeat 5px 20px / 2px 100%;
}

.close {
    display: block;
    width: 8px;
    height: 8px;
    font-size: 8px;
    line-height: 8px;
    color: #fff;
    background-color: #c43a1c;
}

.panel-body {
    flex: 1;
    min-width: 0;
}

.record-bar {
    height: 30px;
    padding-left: 1px;
    background: #f0efec;
    border-bottom: none;
}

.total {
    padding-left: 8px;
}

.table-wrap {
    height: 172px;
    overflow: hidden;
    background-color: #fff;
    border-bottom: 1px solid #8a97a5;
}

table {
    width: 852px;
    table-layout: fixed;
    border-collapse: separate;
    border-spacing: 0;
    border-top: 1px solid #a8a8a8;
}

.c-no { width: 34px; }
.c-name { width: 73px; }
.c-dia { width: 56px; }
.c-grade { width: 36px; }
.c-fig { width: 33px; }
.c-shape { width: 201px; }
.c-formula { width: 166px; }
.c-desc { width: 156px; }
.c-len { width: 61px; }
.c-count { width: 36px; }

th, td {
    border-right: 1px solid #a9c0ae;
    border-bottom: 1px solid #a9c0ae;
    white-space: nowrap;
}

th {
    font-weight: normal;
    background: linear-gradient(#fbfbfa, #e4e3df);
    border-color: #b3b1ab;
}

thead th {
    height: 19px;
}

th.active {
    background: linear-gradient(#fbdba4, #f2b258);
}

tbody th {
    font-family: "Liberation Mono", monospace;
    font-size: 10px;
    padding-right: 6px;
}

tbody tr {
    height: 29px;
}

td {
    padding-left: 2px;
    font-family: "Liberation Mono", monospace;
    font-size: 10px;
    line-height: 12px;
    background-color: #ccffd9;
}

td:nth-child(2) {
    border-right-color: #000;
}

td.desc {
    font-family: "Noto Sans CJK SC", sans-serif;
    font-size: 12px;
    white-space: normal;
}

td.grade {
    padding: 0;
    font-size: 12px;
    text-align: center;
}

.selected th {
    color: #fff;
    background: #fcd07c;
}

.selected .cell {
    background-color: #b4e5d5;
}

td.shape {
    padding: 0;
}

.shape svg {
    display: block;
    width: 200px;
    height: 28px;
}

.shape text {
    fill: #d01818;
    text-anchor: middle;
}

.shape path {
    fill: none;
    stroke: #000;
    stroke-width: 2;
}

/* Status bar */
.status {
    display: flex;
    flex: none;
    height: 8px;
    line-height: 16px;
    overflow: hidden;
    border-top: 1px solid #b5b2a4;
    background-color: #ece9d8;
}

.status-cell {
    width: 306px;
    padding: 2px 0 0 128px;
    border-right: 1px solid #b5b2a4;
}

.status-hint {
    padding: 2px 0 0 51px;
}
```
